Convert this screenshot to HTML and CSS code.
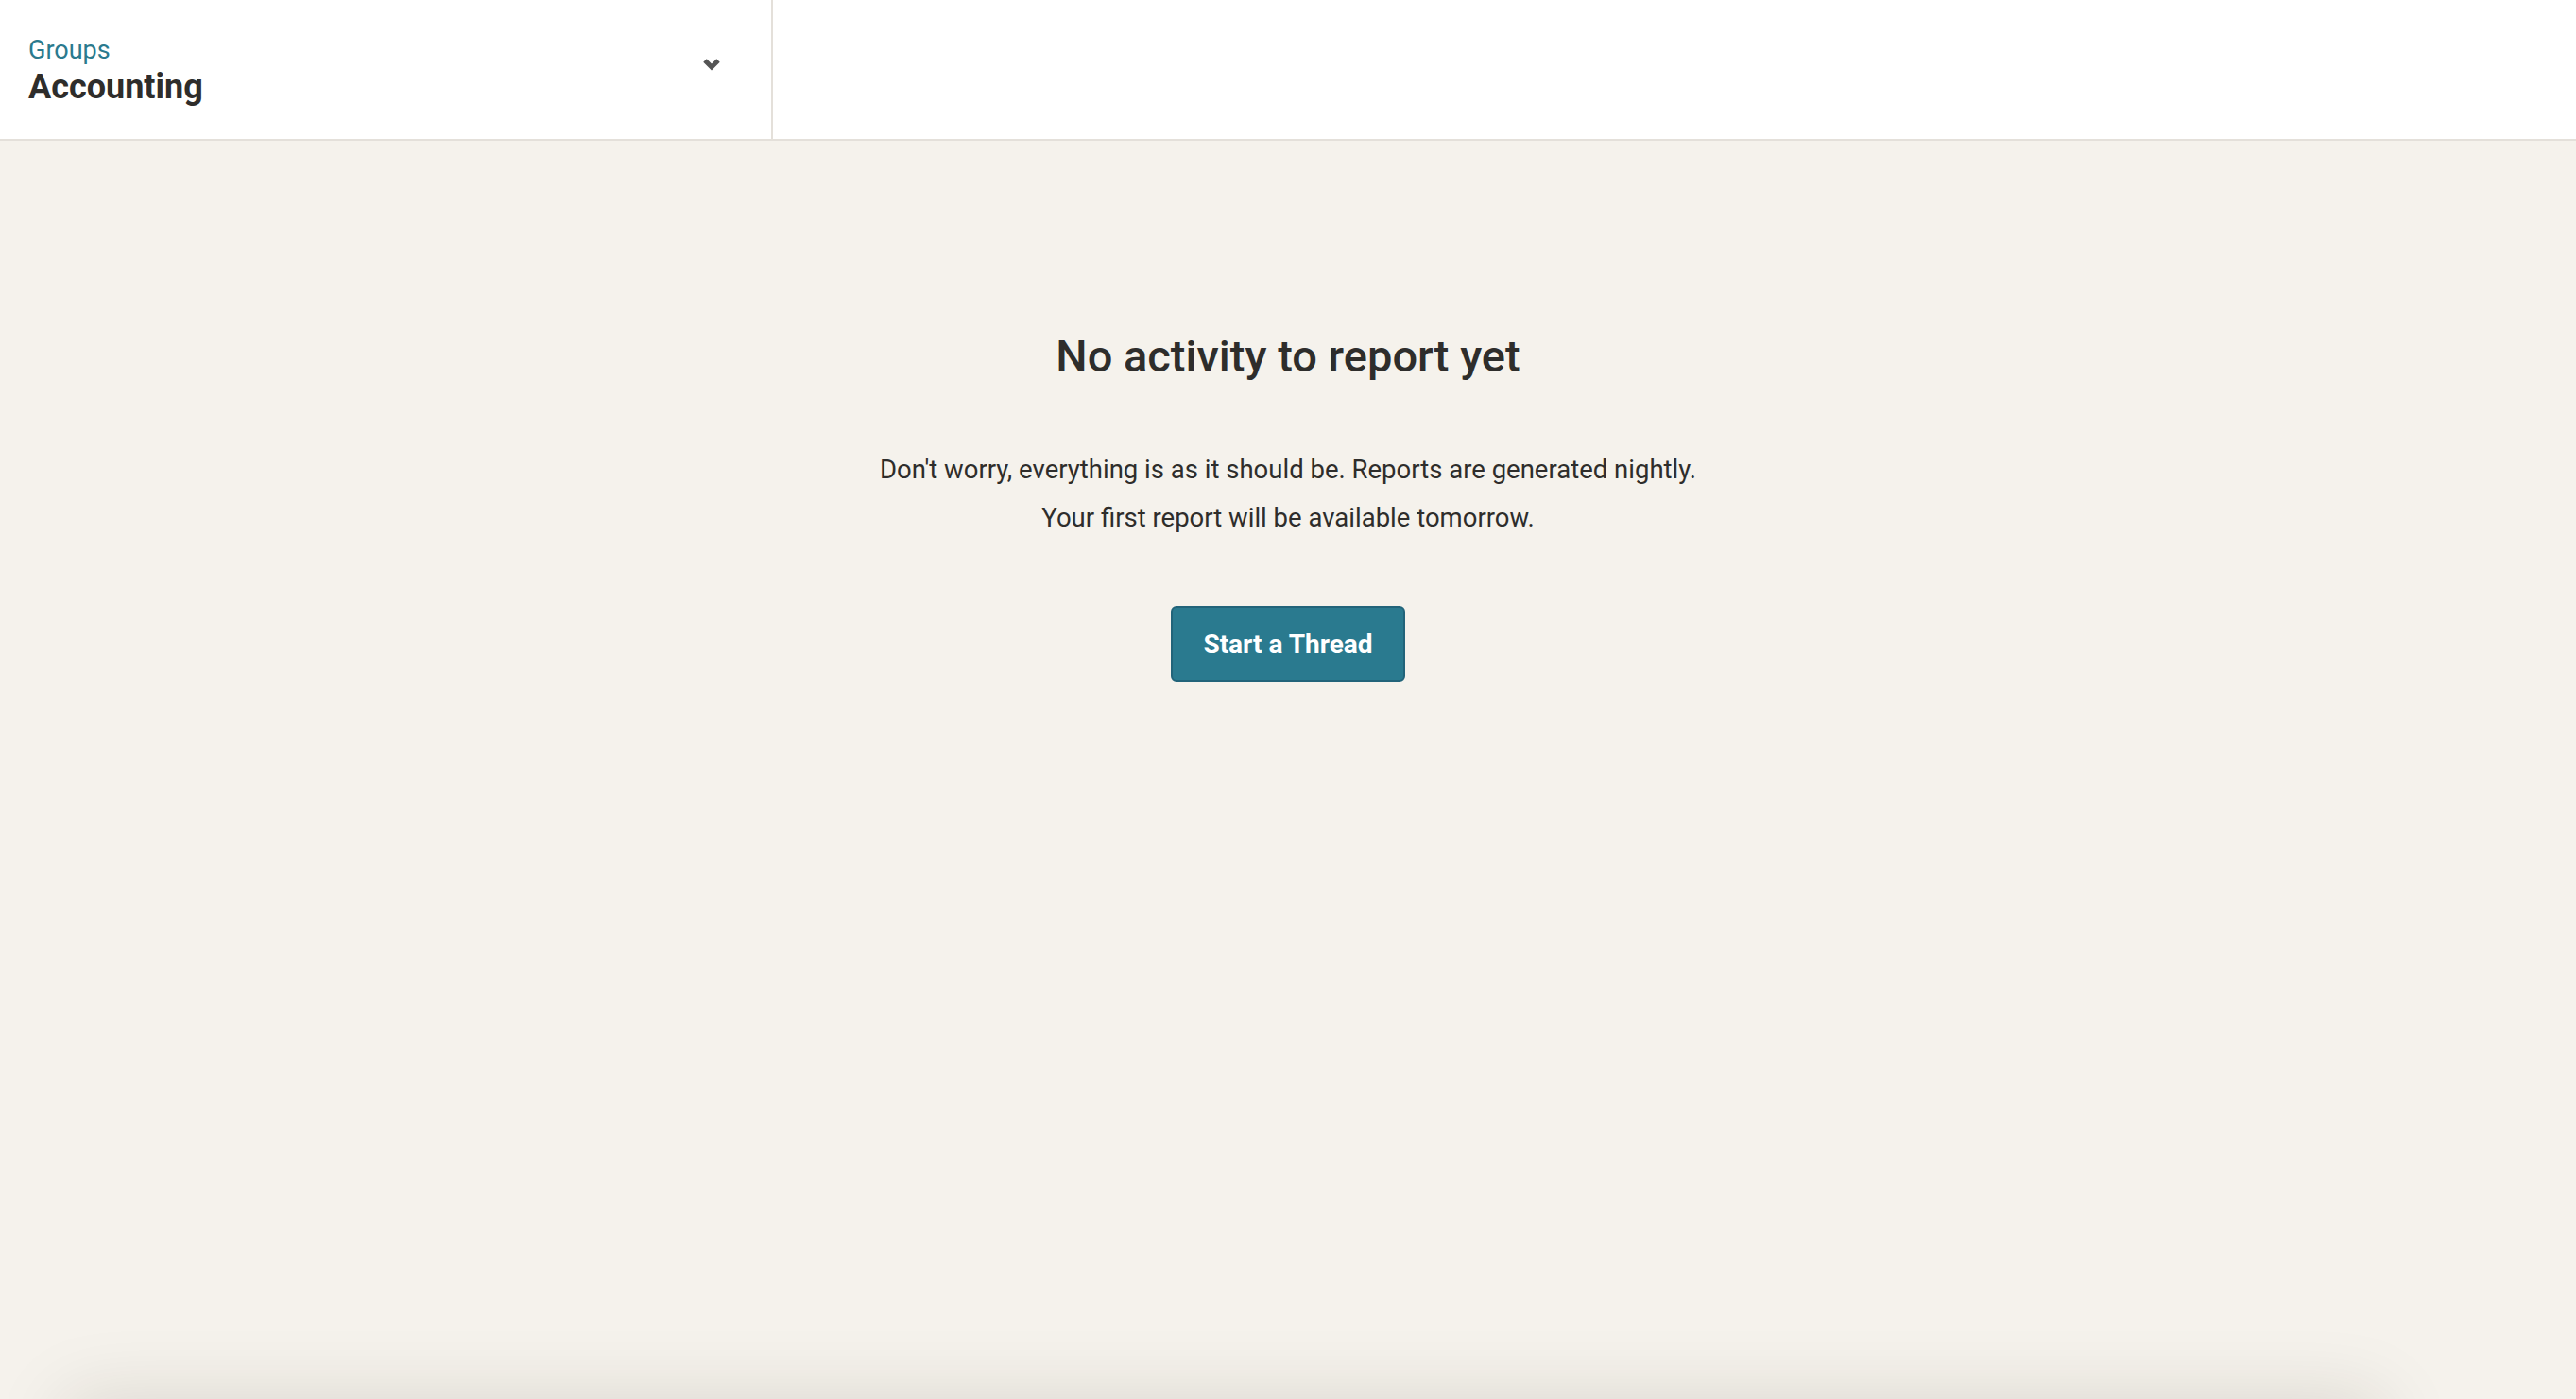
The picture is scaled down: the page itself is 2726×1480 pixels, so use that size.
FILE: index.html
```html
<!DOCTYPE html>
<html lang="en">
<head>
    <meta charset="UTF-8">
    <meta name="viewport" content="width=device-width, initial-scale=1.0">
    <title>Accounting - Activity</title>
    <link rel="stylesheet" href="styles.css">
</head>
<body>
    <!-- Kopfzeile mit Gruppenauswahl -->
    <header class="topbar">
        <div class="group-picker">
            <div class="group-label">
                <span class="group-kicker">Groups</span>
                <span class="group-name">Accounting</span>
            </div>
            <svg class="chevron" width="20" height="14" viewBox="0 0 20 14" aria-hidden="true">
                <path d="M3 3 L10 10 L17 3" fill="none" stroke="#555" stroke-width="5" stroke-linejoin="miter"/>
            </svg>
        </div>
        <div class="topbar-rest"></div>
    </header>

    <!-- Leerer Zustand -->
    <main class="content">
        <section class="empty-state">
            <h2>No activity to report yet</h2>
            <p>Don't worry, everything is as it should be. Reports are generated nightly.<br>
               Your first report will be available tomorrow.</p>
            <button class="button">Start a Thread</button>
        </section>
        <div class="composer"></div>
    </main>
</body>
</html>
```

FILE: styles.css
```css
/* Allgemeines */
body {
    margin: 0;
    height: 100vh;
    display: flex;
    flex-direction: column;
    font-family: Roboto, "Liberation Sans", sans-serif;
    background-color: #f5f2ec;
    color: #2e2d2b;
    overflow: hidden;
}

/* Kopfzeile */
.topbar {
    display: flex;
    height: 147px;
    background-color: #ffffff;
    border-bottom: 2px solid #e4e0da;
}
.group-picker {
    width: 818px;
    display: flex;
    align-items: center;
    justify-content: space-between;
    padding: 0 53px 0 30px;
    box-sizing: border-box;
    border-right: 2px solid #e4e0da;
}
.group-label {
    display: flex;
    flex-direction: column;
    margin-top: 2px;
}
.group-kicker {
    font-size: 27px;
    line-height: 34px;
    color: #2a7a8e;
}
.group-name {
    font-size: 36px;
    line-height: 44px;
    font-weight: 700;
    color: #2e2d2b;
}
.chevron {
    margin-top: -12px;
}
.topbar-rest {
    flex: 1;
}

/* Inhalt */
.content {
    flex: 1;
    position: relative;
    overflow: hidden;
}
.empty-state {
    display: flex;
    flex-direction: column;
    align-items: center;
    text-align: center;
    padding-top: 199px;
}
.empty-state h2 {
    margin: 0;
    font-size: 47px;
    line-height: 58px;
    font-weight: 500;
    color: #2e2d2b;
}
.empty-state p {
    margin: 65px 0 0;
    font-size: 27.5px;
    line-height: 51px;
    color: #2e2d2b;
}

/* Button */
.button {
    margin-top: 68px;
    width: 248px;
    height: 80px;
    font-family: Roboto, "Liberation Sans", sans-serif;
    font-size: 28px;
    font-weight: 700;
    color: #ffffff;
    background-color: #2a7a8f;
    border: 2px solid #22647a;
    border-radius: 6px;
    cursor: pointer;
}
.button:hover {
    background-color: #236a7d;
}

/* Schatten des Eingabebereichs unterhalb des Bildschirms */
.composer {
    position: absolute;
    left: 70px;
    right: 206px;
    bottom: -100px;
    height: 100px;
    box-shadow: 0 0 80px rgba(40, 30, 10, 0.13);
}
```
